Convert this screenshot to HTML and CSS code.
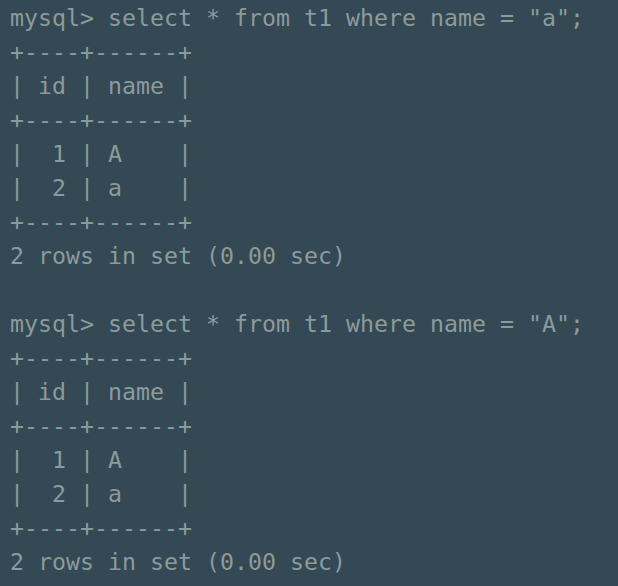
FILE: index.html
```html
<!DOCTYPE html>
<html>
<head>
<meta charset="utf-8">
<link rel="stylesheet" href="styles.css">
</head>
<body>
<pre class="terminal">mysql&gt; select * from t1 where name = "a";
+----+------+
| id | name |
+----+------+
|  1 | A    |
|  2 | a    |
+----+------+
2 rows in set (0.00 sec)

mysql&gt; select * from t1 where name = "A";
+----+------+
| id | name |
+----+------+
|  1 | A    |
|  2 | a    |
+----+------+
2 rows in set (0.00 sec)</pre>
</body>
</html>
```
FILE: styles.css
```css
html, body {
  margin: 0;
  padding: 0;
  background: #344953;
  width: 618px;
  height: 586px;
  overflow: hidden;
}
.terminal {
  margin: 0;
  padding: 1px 0 0 10px;
  font-family: "DejaVu Sans Mono", monospace;
  font-size: 23.25px;
  line-height: 34px;
  color: #8a9b9f;
  white-space: pre;
}
```
